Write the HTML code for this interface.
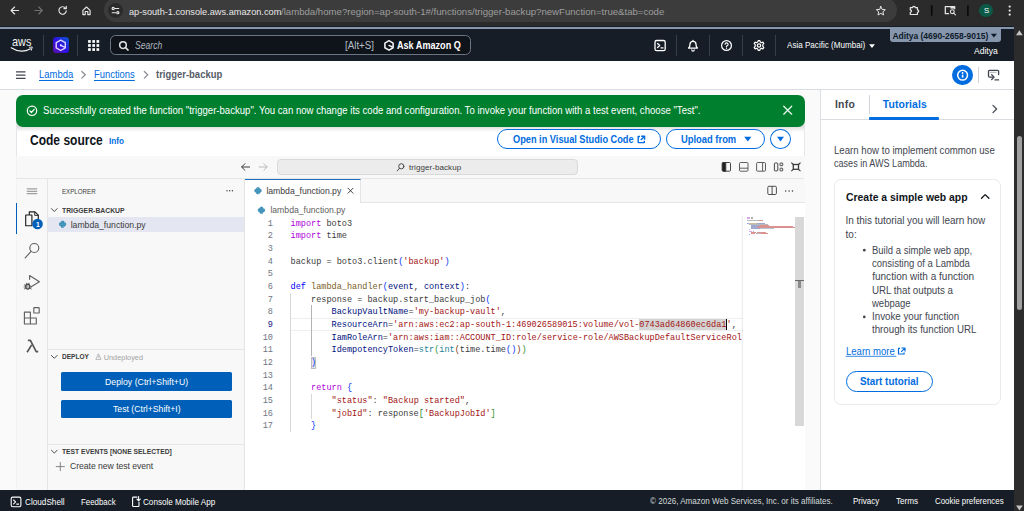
<!DOCTYPE html>
<html lang="en"><head><meta charset="utf-8"><title>trigger-backup - Lambda</title>
<style>

html,body{margin:0;padding:0;overflow:hidden}
body{width:1024px;height:511px;overflow:hidden;background:#fff;position:relative;font-family:"Liberation Sans",sans-serif;}
.t{position:absolute;white-space:pre;}
.a{position:absolute;box-sizing:border-box;}
svg.ov{position:absolute;left:0;top:0;width:1024px;height:511px;overflow:visible;pointer-events:none}
.code{position:absolute;left:290.5px;white-space:pre;font-family:"Liberation Mono",monospace;font-size:8.552px;line-height:12.667px;height:12.667px;color:#3b3b3b;overflow:hidden;width:451.5px}
.num{position:absolute;left:245px;width:27.9px;text-align:right;font-family:"Liberation Mono",monospace;font-size:8.552px;line-height:12.667px;color:#6e7681}
.k{color:#af00db}.d{color:#0000ff}.f{color:#795e26}.p{color:#001080}.s{color:#a31515}.c{color:#267f99}
.b1{color:#0431fa}.b2{color:#319331}.b3{color:#7b3814}
.btn{position:absolute;box-sizing:border-box;border:1.33px solid #006ce0;border-radius:11px;background:#fff}

</style></head>
<body>
<div class="a" style="left:0px;top:0px;width:1024px;height:26.4px;background:#2b2b2b;"></div>
<div class="a" style="left:104.4px;top:-2px;width:792.2px;height:23.8px;background:#3c3c3c;border-radius:12px"></div>
<div class="a" style="left:108.1px;top:3.2px;width:14.8px;height:14.8px;background:#2b2b2b;border-radius:50%"></div>
<div class="a" style="left:979.2px;top:3.8px;width:13.6px;height:13.6px;background:#0b5a47;border-radius:50%"></div>
<div class="a" style="left:0px;top:26.2px;width:1014.3px;height:34.8px;background:#161d26;"></div>
<div class="a" style="left:0px;top:26.7px;width:1014.3px;height:2.8px;background:#8696ad;"></div>
<div class="a" style="left:889.8px;top:26.5px;width:111.3px;height:15.3px;background:#8696ad;border-radius:0 0 3px 3px"></div>
<div class="a" style="left:110.2px;top:34.9px;width:360.4px;height:20.6px;background:#0f141a;border:1.3px solid #6b7583;border-radius:5.5px"></div>
<div class="a" style="left:43.2px;top:35px;width:0.9px;height:20.5px;background:#353e4a;"></div>
<div class="a" style="left:77.2px;top:35px;width:0.9px;height:20.5px;background:#353e4a;"></div>
<div class="a" style="left:676.2px;top:35px;width:0.9px;height:20.5px;background:#353e4a;"></div>
<div class="a" style="left:709.2px;top:35px;width:0.9px;height:20.5px;background:#353e4a;"></div>
<div class="a" style="left:742.2px;top:35px;width:0.9px;height:20.5px;background:#353e4a;"></div>
<div class="a" style="left:775.4px;top:35px;width:0.9px;height:20.5px;background:#353e4a;"></div>
<div class="a" style="left:52.75px;top:37px;width:16.2px;height:16.1px;background:linear-gradient(45deg,#5a0fb2 5%,#2c12e4 50%,#0a5ad0 100%);border-radius:3.6px"></div>
<div class="a" style="left:0px;top:61px;width:1014.3px;height:28.5px;background:#fff;border-bottom:1px solid #d9dde2"></div>
<div class="a" style="left:977.9px;top:66.8px;width:0.9px;height:16px;background:#cdd0d6;"></div>
<div class="a" style="left:952.4px;top:64.9px;width:20.5px;height:20.5px;background:#006ce0;border-radius:50%"></div>
<div class="a" style="left:820.1px;top:89.5px;width:194.2px;height:400.5px;background:#fff;border-left:1.3px solid #dde0e5"></div>
<div class="a" style="left:821px;top:119px;width:193.3px;height:1px;background:#d9dde2;"></div>
<div class="a" style="left:868.6px;top:95px;width:0.9px;height:18.6px;background:#d0d4da;"></div>
<div class="a" style="left:869px;top:117px;width:70px;height:2.6px;background:#006ce0;border-radius:1px"></div>
<div class="a" style="left:834.4px;top:178.8px;width:166.4px;height:226.4px;background:#fff;border:1px solid #e8eaed;border-radius:7px"></div>
<div class="a" style="left:0px;top:90px;width:820.3px;height:400px;background:#fafafb;"></div>
<div class="a" style="left:16.2px;top:110px;width:788.6px;height:46px;background:#fff;border-left:1px solid #e2e5e9;border-right:1px solid #e6e8ec"></div>
<div class="a" style="left:245px;top:178.8px;width:559.5px;height:311.2px;background:#fff;"></div>
<div class="a" style="left:17.2px;top:124px;width:787.2px;height:7.5px;background:linear-gradient(rgba(0,0,0,.13) 30%,rgba(0,0,0,0));"></div>
<div class="a" style="left:16px;top:95px;width:789px;height:31.6px;background:#00802f;border-radius:7px"></div>
<div class="btn" style="left:497px;top:129px;width:163.5px;height:20.3px"></div>
<div class="btn" style="left:666px;top:129px;width:99px;height:20.3px"></div>
<div class="btn" style="left:770.2px;top:129px;width:20.6px;height:20.3px;border-radius:50%"></div>
<div class="a" style="left:16.2px;top:155.5px;width:788.3px;height:23.3px;background:#f8f8f8;border-bottom:1px solid #e5e5e5;border-left:1px solid #f3f3f4"></div>
<div class="a" style="left:277.25px;top:159.25px;width:300.75px;height:15.3px;background:#ececec;border:1px solid #d9d9d9;border-radius:4px"></div>
<div class="a" style="left:16.2px;top:178.8px;width:31.8px;height:311.2px;background:#f8f8f8;border-right:1px solid #e5e5e5;border-left:1px solid #f3f3f4"></div>
<div class="a" style="left:48px;top:178.8px;width:197px;height:311.2px;background:#f8f8f8;border-right:1px solid #e5e5e5"></div>
<div class="a" style="left:245px;top:178.8px;width:559.5px;height:24px;background:#f8f8f8;border-bottom:1px solid #e5e5e5"></div>
<div class="a" style="left:245px;top:178.8px;width:115.5px;height:24px;background:#fff;border-top:.8px solid #1a6fc0;border-right:1px solid #e5e5e5"></div>
<div class="a" style="left:16px;top:202.6px;width:1.4px;height:31.8px;background:#005fb8;"></div>
<div class="a" style="left:48px;top:217px;width:196.3px;height:14.8px;background:#e4e6f1;"></div>
<div class="a" style="left:48px;top:349.3px;width:196.3px;height:1px;background:#e5e5e5;"></div>
<div class="a" style="left:48px;top:444.3px;width:196.3px;height:1px;background:#e5e5e5;"></div>
<div class="a" style="left:61.25px;top:372px;width:170.25px;height:18.75px;background:#005fb8;border-radius:1.5px"></div>
<div class="a" style="left:61.25px;top:399.5px;width:170.25px;height:18.6px;background:#005fb8;border-radius:1.5px"></div>
<div class="a" style="left:290.5px;top:318.0px;width:452px;height:1.2px;background:#eeeeee;"></div>
<div class="a" style="left:290.5px;top:329.5px;width:452px;height:1.2px;background:#eeeeee;"></div>
<div class="a" style="left:639.4px;top:318.9px;width:86.9px;height:11.2px;background:#d4d4d4;"></div>
<div class="a" style="left:726.2px;top:318.6px;width:1px;height:11.8px;background:#000;"></div>
<div class="a" style="left:290.3px;top:292.7px;width:0.8px;height:139.6px;background:#d8d8d8;"></div>
<div class="a" style="left:310.6px;top:305.4px;width:0.9px;height:50.6px;background:#b4b4b4;"></div>
<div class="a" style="left:310.6px;top:394px;width:0.9px;height:25.4px;background:#d8d8d8;"></div>
<div class="a" style="left:311px;top:356.8px;width:5.4px;height:11.8px;background:#e6e6e6;border:0.7px solid #bdbdbd"></div>
<div class="a" style="left:741.4px;top:216.2px;width:1.4px;height:273.8px;background:linear-gradient(90deg,rgba(0,0,0,0),rgba(0,0,0,.09));"></div>
<div class="a" style="left:795px;top:216.9px;width:9.3px;height:209.6px;background:#d8d8d8;"></div>
<div class="a" style="left:795.2px;top:279.6px;width:9px;height:1.6px;background:#6a6a6a;"></div>
<div class="a" style="left:798.4px;top:281px;width:2.6px;height:6.6px;background:#8a8a8a;"></div>
<div class="a" style="left:0px;top:489.8px;width:1014.3px;height:21.2px;background:#161d26;"></div>
<div class="a" style="left:1014.3px;top:26.4px;width:9.7px;height:484.6px;background:#2c2c2c;"></div>
<div class="a" style="left:1016.7px;top:136px;width:5.6px;height:173.5px;background:#a0a0a0;border-radius:2.8px"></div>
<div class="a" style="left:747.0px;top:217.1px;width:3.18px;height:1.1px;background:#c56ae0;opacity:.6"></div>
<div class="a" style="left:750.71px;top:217.1px;width:2.65px;height:1.1px;background:#777;opacity:.6"></div>
<div class="a" style="left:747.0px;top:218.18px;width:3.18px;height:1.1px;background:#c56ae0;opacity:.6"></div>
<div class="a" style="left:750.71px;top:218.18px;width:2.12px;height:1.1px;background:#777;opacity:.6"></div>
<div class="a" style="left:747.0px;top:220.34px;width:12.19px;height:1.1px;background:#8a8a8a;opacity:.6"></div>
<div class="a" style="left:759.19px;top:220.34px;width:4.24px;height:1.1px;background:#c44848;opacity:.6"></div>
<div class="a" style="left:747.0px;top:222.5px;width:1.59px;height:1.1px;background:#6a6af0;opacity:.6"></div>
<div class="a" style="left:749.12px;top:222.5px;width:7.42px;height:1.1px;background:#a8935f;opacity:.6"></div>
<div class="a" style="left:757.07px;top:222.5px;width:7.95px;height:1.1px;background:#5f6fb0;opacity:.6"></div>
<div class="a" style="left:749.12px;top:223.58px;width:18.55px;height:1.1px;background:#8a8a8a;opacity:.6"></div>
<div class="a" style="left:751.24px;top:224.66px;width:8.48px;height:1.1px;background:#5f6fb0;opacity:.6"></div>
<div class="a" style="left:759.72px;top:224.66px;width:9.54px;height:1.1px;background:#c44848;opacity:.6"></div>
<div class="a" style="left:751.24px;top:225.74px;width:6.36px;height:1.1px;background:#5f6fb0;opacity:.6"></div>
<div class="a" style="left:757.6px;top:225.74px;width:34.98px;height:1.1px;background:#c44848;opacity:.6"></div>
<div class="a" style="left:751.24px;top:226.82px;width:5.83px;height:1.1px;background:#5f6fb0;opacity:.6"></div>
<div class="a" style="left:757.07px;top:226.82px;width:37.53px;height:1.1px;background:#c44848;opacity:.6"></div>
<div class="a" style="left:751.24px;top:227.9px;width:9.01px;height:1.1px;background:#5f6fb0;opacity:.6"></div>
<div class="a" style="left:760.25px;top:227.9px;width:13.25px;height:1.1px;background:#7aa7b5;opacity:.6"></div>
<div class="a" style="left:749.12px;top:228.98px;width:0.53px;height:1.1px;background:#6a6af0;opacity:.6"></div>
<div class="a" style="left:749.12px;top:231.14px;width:3.18px;height:1.1px;background:#c56ae0;opacity:.6"></div>
<div class="a" style="left:752.83px;top:231.14px;width:0.53px;height:1.1px;background:#6a6af0;opacity:.6"></div>
<div class="a" style="left:751.24px;top:232.22px;width:4.77px;height:1.1px;background:#c44848;opacity:.6"></div>
<div class="a" style="left:757.07px;top:232.22px;width:9.01px;height:1.1px;background:#c44848;opacity:.6"></div>
<div class="a" style="left:751.24px;top:233.3px;width:3.71px;height:1.1px;background:#c44848;opacity:.6"></div>
<div class="a" style="left:756.01px;top:233.3px;width:4.77px;height:1.1px;background:#8a8a8a;opacity:.6"></div>
<div class="a" style="left:760.78px;top:233.3px;width:7.42px;height:1.1px;background:#c44848;opacity:.6"></div>
<div class="a" style="left:749.12px;top:234.38px;width:0.53px;height:1.1px;background:#6a6af0;opacity:.6"></div>
<div class="num" style="top:217.8px">1</div><div class="code" style="top:217.8px"><span class="k">import</span> boto3</div>
<div class="num" style="top:230.47px">2</div><div class="code" style="top:230.47px"><span class="k">import</span> time</div>
<div class="num" style="top:243.13px">3</div><div class="code" style="top:243.13px"></div>
<div class="num" style="top:255.8px">4</div><div class="code" style="top:255.8px">backup = boto3.client<span class="b1">(</span><span class="s">'backup'</span><span class="b1">)</span></div>
<div class="num" style="top:268.47px">5</div><div class="code" style="top:268.47px"></div>
<div class="num" style="top:281.13px">6</div><div class="code" style="top:281.13px"><span class="d">def</span> <span class="f">lambda_handler</span><span class="b1">(</span><span class="p">event</span>, <span class="p">context</span><span class="b1">)</span>:</div>
<div class="num" style="top:293.8px">7</div><div class="code" style="top:293.8px">    response = backup.start_backup_job<span class="b1">(</span></div>
<div class="num" style="top:306.47px">8</div><div class="code" style="top:306.47px">        <span class="p">BackupVaultName</span>=<span class="s">'my-backup-vault'</span>,</div>
<div class="num" style="top:319.14px;color:#171184">9</div><div class="code" style="top:319.14px">        <span class="p">ResourceArn</span>=<span class="s">'arn:aws:ec2:ap-south-1:469026589015:volume/vol-0743ad64860ec6da1'</span>,</div>
<div class="num" style="top:331.8px">10</div><div class="code" style="top:331.8px">        <span class="p">IamRoleArn</span>=<span class="s">'arn:aws:iam::ACCOUNT_ID:role/service-role/AWSBackupDefaultServiceRole'</span>,</div>
<div class="num" style="top:344.47px">11</div><div class="code" style="top:344.47px">        <span class="p">IdempotencyToken</span>=<span class="c">str</span><span class="b2">(</span><span class="c">int</span><span class="b3">(</span>time.time<span class="b1">()</span><span class="b3">)</span><span class="b2">)</span></div>
<div class="num" style="top:357.14px">12</div><div class="code" style="top:357.14px">    <span class="b1">)</span></div>
<div class="num" style="top:369.8px">13</div><div class="code" style="top:369.8px"></div>
<div class="num" style="top:382.47px">14</div><div class="code" style="top:382.47px">    <span class="k">return</span> <span class="b1">{</span></div>
<div class="num" style="top:395.14px">15</div><div class="code" style="top:395.14px">        <span class="s">"status"</span>: <span class="s">"Backup started"</span>,</div>
<div class="num" style="top:407.81px">16</div><div class="code" style="top:407.81px">        <span class="s">"jobId"</span>: response<span class="b2">[</span><span class="s">'BackupJobId'</span><span class="b2">]</span></div>
<div class="num" style="top:420.47px">17</div><div class="code" style="top:420.47px">    <span class="b1">}</span></div>
<svg class="ov" viewBox="0 0 1024 511"><g fill="none" stroke="#e6e6e6" stroke-width="1.15" stroke-linecap="round" stroke-linejoin="round"><path d="M18.6 10.5H11.2M14.6 7L11.1 10.5L14.6 14"/><path d="M34.8 10.5H42.2M38.8 7L42.3 10.5L38.8 14" stroke="#707070"/><path d="M65.6 8.3A3.7 3.7 0 1 0 66.3 10.9"/><path d="M66.3 6.2V8.6H63.9"/><path d="M82.9 10.3L86.5 7L90.1 10.3V14.6H87.8V11.5H85.2V14.6H82.9Z"/><path d="M115.2 8.5H118.7M112.2 12.7H115.6"/><circle cx="113.2" cy="8.5" r="1.1"/><circle cx="117.8" cy="12.7" r="1.1"/><path d="M880.8 6.4L882.1 9.4L885.3 9.7L882.9 11.8L883.6 15L880.8 13.3L878 15L878.7 11.8L876.3 9.7L879.5 9.400Z" stroke-width="1"/><path d="M910.3 7.6H912.6A1.3 1.3 0 0 1 915.2 7.600H917.4V9.800A1.3 1.3 0 0 1 917.4 12.4V14.500H910.3V12.3A1.2 1.2 0 0 0 910.3 9.900Z" stroke-width="1.2"/><path d="M948.600 13.700H945.300V6.600H954.700V8.800" stroke-width="1.250"/><rect x="950.400" y="6.600" width="4.300" height="2" fill="#e6e6e6" stroke="none"/><circle cx="952.3" cy="11.7" r="1.9" stroke-width="1.1"/><path d="M953.8 13.2L955.4 14.8" stroke-width="1.1"/></g>
<rect x="930.900" y="5.300" width="1.600" height="10.500" rx=".5" fill="#080808"/><rect x="967.100" y="5.300" width="1.600" height="10.500" rx=".5" fill="#080808"/>
<circle cx="1009.7" cy="6.6" r="1.150" fill="#e6e6e6"/><circle cx="1009.7" cy="10.6" r="1.150" fill="#e6e6e6"/><circle cx="1009.7" cy="14.6" r="1.150" fill="#e6e6e6"/>
<path d="M1016 35.200L1019.400 30.200L1022.800 35.200Z" fill="#c4c4c4"/><path d="M1016 505.400L1019.400 510.400L1022.800 505.400Z" fill="#c4c4c4"/>
<path d="M11.200 47.800Q20.800 54.100 30.600 48.800" stroke="#f4f4f4" stroke-width="1.200" fill="none" stroke-linecap="round"/><path d="M29.300 47.300L32.300 47L31.300 50.300" fill="none" stroke="#f4f4f4" stroke-width=".9" stroke-linejoin="round" stroke-linecap="round"/>
<g fill="none" stroke="#ddd3ff" stroke-width="1.400" stroke-linejoin="round"><path d="M60.750 40.100L65.300 42.700V47.900L60.750 50.500L56.200 47.900V42.700Z"/><path d="M60.750 45.300L64.600 47.100" stroke-linecap="round"/></g><circle cx="60.750" cy="45.300" r="1" fill="#efeaff"/>
<g fill="#fff"><rect x="88.10" y="40.10" width="2.700" height="2.700"/><rect x="92.30" y="40.10" width="2.700" height="2.700"/><rect x="96.50" y="40.10" width="2.700" height="2.700"/><rect x="88.10" y="44.15" width="2.700" height="2.700"/><rect x="92.30" y="44.15" width="2.700" height="2.700"/><rect x="96.50" y="44.15" width="2.700" height="2.700"/><rect x="88.10" y="48.20" width="2.700" height="2.700"/><rect x="92.30" y="48.20" width="2.700" height="2.700"/><rect x="96.50" y="48.20" width="2.700" height="2.700"/></g>
<g fill="none" stroke="#e2e3e8" stroke-width="1.500" stroke-linecap="round"><circle cx="123" cy="45.100" r="3.300"/><path d="M125.500 47.600L128.100 50.100"/></g>
<g fill="none" stroke="#f2f3f5" stroke-width="1.550" stroke-linejoin="round"><path d="M389 40.700L393.100 43.050V47.750L389 50.100L384.900 47.750V43.050Z"/><path d="M389 45.400L392.300 47" stroke-linecap="round" stroke-width="1.400"/></g>
<g fill="none" stroke="#fff" stroke-width="1.300" stroke-linecap="round" stroke-linejoin="round"><rect x="655" y="40.500" width="10.200" height="10.200" rx="1.700"/><path d="M657.500 43.600L659.700 45.600L657.500 47.600M661 47.900H663"/><path d="M688.600 48.100H697.400C696.300 47.100 696 46.200 696 44.300A3 3 0 0 0 690 44.300C690 46.200 689.700 47.100 688.600 48.100Z" stroke-width="1.300"/><path d="M691.800 49.900A1.200 1.200 0 0 0 694.200 49.900" stroke-width="1.200"/><path d="M693 40.400V41.200"/><circle cx="726.500" cy="45.500" r="4.900" stroke-width="1.250"/><path d="M725 44.300A1.550 1.550 0 1 1 726.500 46V46.900" stroke-width="1.150"/><circle cx="726.500" cy="48.500" r=".6" fill="#fff" stroke="none"/><circle cx="759" cy="45.500" r="1.700" stroke-width="1.200"/><path d="M758.200 40.600H759.800L760.300 42L761.500 42.700L762.900 42.100L763.800 43.600L762.800 44.700V46.300L763.800 47.400L762.900 48.900L761.500 48.300L760.300 49L759.800 50.400H758.200L757.700 49L756.500 48.300L755.100 48.900L754.200 47.400L755.200 46.300V44.700L754.200 43.600L755.100 42.100L756.500 42.700L757.700 42Z" stroke-width="1.200"/></g>
<path d="M869.100 44.200H874.900L872 48Z" fill="#fff"/><path d="M990.800 33.700H997L993.900 37.600Z" fill="#0f1b2a"/>
<path d="M16 71.750H25.500M16 75H25.500M16 78.250H25.500" stroke="#424650" stroke-width="1.25"/>
<g fill="none" stroke="#8c8c94" stroke-width="1.2" stroke-linecap="round" stroke-linejoin="round"><path d="M81.800 71.500L85.300 74.800L81.800 78.100"/><path d="M144.300 71.500L147.800 74.800L144.300 78.100"/></g>
<circle cx="962.6" cy="75.2" r="4.900" fill="none" stroke="#fff" stroke-width="1.500"/><path d="M962.600 74.700V77.600" stroke="#fff" stroke-width="1.600"/><circle cx="962.600" cy="73" r=".9" fill="#fff"/>
<g fill="none" stroke="#424650" stroke-width="1.3" stroke-linejoin="round" stroke-linecap="round"><path d="M998.600 74.600V71.300Q998.600 70.400 997.700 70.400H989.400Q988.500 70.400 988.500 71.300V76.100Q988.500 77.100 989.500 77.100H993.400"/><path d="M990.200 72.300H996" stroke-width=".8" opacity=".55"/><path d="M991.700 74.700L994.100 77.100L991.700 79.500"/><path d="M995 79.900H998.600"/></g>
<g fill="none" stroke="#fff" stroke-width="1.2" stroke-linecap="round" stroke-linejoin="round"><circle cx="32" cy="110.800" r="4.700"/><path d="M29.900 110.900L31.400 112.500L34.200 109.300"/><path d="M783.700 106.200L791.700 114.200M791.700 106.200L783.700 114.200" stroke-width="1.250" stroke="#eef6f0"/></g>
<g fill="none" stroke="#006ce0" stroke-width="1.400" stroke-linejoin="round"><path d="M640 136.500H638.200V142.600H644.300V140.800"/><path d="M641.100 136.200H644.600V139.700M644.400 136.400L640.800 140"/></g>
<path d="M744.200 136.700H751.400L747.800 141.500Z" fill="#006ce0"/><path d="M777 136.800H784L780.500 141.500Z" fill="#006ce0"/>
<g fill="none" stroke-width="1" stroke-linecap="round" stroke-linejoin="round"><path d="M249.600 167H241.800M244.900 163.700L241.600 167L244.900 170.300" stroke="#3b3b3b"/><path d="M259.200 167H267M263.900 163.700L267.200 167L263.900 170.300" stroke="#b9b9b9"/><circle cx="401.300" cy="166.300" r="2.600" stroke="#3b3b3b" stroke-width=".9"/><path d="M399.500 168.300L397.200 170.900" stroke="#3b3b3b" stroke-width=".9"/></g>
<g fill="none" stroke="#3b3b3b" stroke-width=".95"><rect x="722.300" y="162.500" width="8.200" height="8.700" rx="1.100"/><path d="M722.300 163.400Q722.300 162.500 723.300 162.500H725.800V171.200H723.300Q722.300 171.200 722.300 170.200Z" fill="#1f1f1f"/><rect x="739.500" y="162.500" width="8.500" height="8.700" rx="1.100" stroke="#555"/><path d="M739.500 168.200H748" stroke="#555"/><rect x="756.600" y="162.500" width="8.900" height="8.700" rx="1.100" stroke="#555"/><path d="M762.600 162.500V171.200" stroke="#555"/><rect x="774.400" y="163" width="3.400" height="7.900" rx=".8"/><rect x="780" y="163" width="2.700" height="2.700" rx=".6"/><rect x="780" y="168.200" width="2.700" height="2.700" rx=".6"/><rect x="793.300" y="164.500" width="5.200" height="4.800" stroke-width="1.300"/><path d="M791.300 162.600L793.300 164.500M800.500 162.600L798.500 164.500M791.300 171.200L793.300 169.300M800.500 171.200L798.500 169.300" stroke-width="1.100"/></g>
<path d="M26.800 188.900H37.200M26.800 191.300H37.200M26.800 193.700H37.200" stroke="#6e6e6e" stroke-width=".8"/>
<g fill="none" stroke="#1f1f1f" stroke-width="1.15" stroke-linejoin="round"><path d="M29.300 214.900V211.800H34.900L38.300 215.200V223.600H36"/><path d="M34.700 211.900V215.400H38.200" stroke-width=".9"/><path d="M25.700 215H31.900V225.700H25.700Z"/></g>
<circle cx="37.500" cy="224" r="5.300" fill="#005fb8"/>
<g fill="none" stroke="#616161" stroke-width="1.15" stroke-linecap="round" stroke-linejoin="round"><circle cx="34.300" cy="248" r="4.500"/><path d="M31.100 251.300L25.200 257.900"/><path d="M29.600 279.300V275.600L39.400 281.800L31.600 286.600"/><ellipse cx="27.800" cy="286.500" rx="2.100" ry="2.500" stroke="#4a4a4a" stroke-width="1.250" fill="#b9b9b9"/><path d="M24.300 284.800L25.800 285.600M24 286.900H25.600M24.300 289L25.800 288.100M31.300 289L29.800 288.100M31.600 286.900H30M26.500 283.100L27 284M29.100 283.100L28.600 284" stroke-width=".8" stroke="#4a4a4a"/><path d="M24.400 312.100H30.400V324H24.400ZM24.400 318H36.300V324H30.400V312.100" /><rect x="33.800" y="307.600" width="5.400" height="5.400" rx=".6"/></g>
<g fill="none" stroke="#565656" stroke-width="1.700" stroke-linejoin="round"><path d="M27.900 340.400H30.400L36.200 351.700H38.200"/><path d="M31.700 344.900L27.100 352.200"/></g>
<g fill="none" stroke="#3b3b3b" stroke-width=".9" stroke-linecap="round" stroke-linejoin="round"><path d="M51.400 208.600L54.300 211.500L57.200 208.600"/><path d="M51.400 355.400L54.300 358.300L57.200 355.400"/><path d="M51.400 450.200L54.300 453.100L57.200 450.200"/><path d="M56.200 466.600H64.400M60.300 462.500V470.700" stroke="#6a6a6a" stroke-width=".8"/></g>
<g fill="#3b3b3b"><circle cx="227" cy="190.800" r=".7"/><circle cx="229.700" cy="190.800" r=".7"/><circle cx="232.400" cy="190.800" r=".7"/><circle cx="785.700" cy="190.900" r=".75"/><circle cx="789.100" cy="190.900" r=".75"/><circle cx="792.500" cy="190.900" r=".75"/></g>
<path d="M98.400 353.800L101 359.400H95.800Z" fill="none" stroke="#a0a0a0" stroke-width=".7" stroke-linejoin="round"/><path d="M98.400 355.700V357.600" stroke="#a0a0a0" stroke-width=".7"/>
<g transform="translate(62.6 224.2) scale(1)" fill="#3b8fb8"><rect x="-3.600" y="-1.700" width="7.200" height="3.400" rx="1.300"/><rect x="-1.800" y="-3.500" width="3.600" height="7" rx="1.300"/><rect x="-2.300" y="-2.300" width="2" height="2" rx=".6" opacity=".55"/><rect x="0.300" y="0.300" width="2" height="2" rx=".6" opacity=".55"/><circle cx="-0.700" cy="-2.400" r=".4" fill="#eaf3f8"/><circle cx="0.700" cy="2.400" r=".4" fill="#eaf3f8"/><path d="M-3.300 0.100H0.200M-0.200 -0.100H3.300" stroke="#d5e8f2" stroke-width=".3" opacity=".6"/></g>
<g transform="translate(258 190.7) scale(1)" fill="#3b8fb8"><rect x="-3.600" y="-1.700" width="7.200" height="3.400" rx="1.300"/><rect x="-1.800" y="-3.500" width="3.600" height="7" rx="1.300"/><rect x="-2.300" y="-2.300" width="2" height="2" rx=".6" opacity=".55"/><rect x="0.300" y="0.300" width="2" height="2" rx=".6" opacity=".55"/><circle cx="-0.700" cy="-2.400" r=".4" fill="#eaf3f8"/><circle cx="0.700" cy="2.400" r=".4" fill="#eaf3f8"/><path d="M-3.300 0.100H0.200M-0.200 -0.100H3.300" stroke="#d5e8f2" stroke-width=".3" opacity=".6"/></g>
<g transform="translate(261.4 210.2) scale(1)" fill="#3b8fb8"><rect x="-3.600" y="-1.700" width="7.200" height="3.400" rx="1.300"/><rect x="-1.800" y="-3.500" width="3.600" height="7" rx="1.300"/><rect x="-2.300" y="-2.300" width="2" height="2" rx=".6" opacity=".55"/><rect x="0.300" y="0.300" width="2" height="2" rx=".6" opacity=".55"/><circle cx="-0.700" cy="-2.400" r=".4" fill="#eaf3f8"/><circle cx="0.700" cy="2.400" r=".4" fill="#eaf3f8"/><path d="M-3.300 0.100H0.200M-0.200 -0.100H3.300" stroke="#d5e8f2" stroke-width=".3" opacity=".6"/></g>
<path d="M348 188.200L353 193.200M353 188.200L348 193.200" stroke="#3b3b3b" stroke-width=".95" stroke-linecap="round"/>
<g fill="none" stroke="#3b3b3b" stroke-width=".9"><rect x="767.800" y="186.300" width="8.600" height="8.200" rx="1.100"/><path d="M772.100 186.300V194.500"/></g>
<g fill="none" stroke-linecap="round" stroke-linejoin="round"><path d="M993 105.300L996.600 109L993 112.700" stroke="#424650" stroke-width="1.200"/><path d="M981.500 198.300L985.200 194.600L988.900 198.300" stroke="#0f141a" stroke-width="1.300"/></g>
<g fill="none" stroke="#006ce0" stroke-width="1.2" stroke-linejoin="round"><path d="M900 348.400H898.500V354H904.100V352.500"/><path d="M901.400 348H905V351.600M904.800 348.200L901.200 351.800"/></g>
<circle cx="864.300" cy="250.200" r="1.350" fill="#424650"/><circle cx="864.300" cy="316.900" r="1.350" fill="#424650"/>
<path d="M845.600 356.300H896.300" stroke="#006ce0" stroke-width=".8"/>
<g fill="none" stroke="#fff" stroke-width="1.1" stroke-linecap="round" stroke-linejoin="round"><rect x="11.200" y="497.100" width="9.700" height="9.700" rx="1.600"/><path d="M13.600 500L15.600 501.900L13.600 503.800M16.700 504.100H18.600"/><path d="M137 497.100H133.400Q132.600 497.100 132.600 497.900V505.700Q132.600 506.500 133.400 506.500H138.200Q139 506.500 139 505.700V502.400"/><path d="M138.600 496.500V500.600M136.900 499.100L138.600 500.800L140.300 499.100"/></g></svg>
<span class="t" style="left:128.6px;top:5.73px;font-size:9.8px;line-height:12.74px;color:#e8e8e8;transform:scaleX(0.9385);transform-origin:0 50%;">ap-south-1.console.aws.amazon.com</span>
<span class="t" style="left:281px;top:5.73px;font-size:9.8px;line-height:12.74px;color:#9e9e9e;transform:scaleX(0.9809);transform-origin:0 50%;">/lambda/home?region=ap-south-1#/functions/trigger-backup?newFunction=true&amp;tab=code</span>
<span class="t" style="left:983.5px;top:5.5px;font-size:8px;line-height:10.4px;color:#fff;transform:scaleX(0.9731);transform-origin:0 50%;">S</span>
<span class="t" style="left:11.9px;top:33.84px;font-size:12.4px;line-height:16.12px;color:#f4f4f4;transform:scaleX(0.8799);transform-origin:0 50%;">aws</span>
<span class="t" style="left:135px;top:39.0px;font-size:10.0px;line-height:13.0px;color:#b0b6c0;font-style:italic;transform:scaleX(0.8584);transform-origin:0 50%;">Search</span>
<span class="t" style="left:344.7px;top:38.8px;font-size:10.0px;line-height:13.0px;color:#b6bec9;transform:scaleX(0.9748);transform-origin:0 50%;">[Alt+S]</span>
<span class="t" style="left:397.4px;top:39.0px;font-size:10.0px;line-height:13.0px;color:#fff;font-weight:700;transform:scaleX(0.9088);transform-origin:0 50%;">Ask Amazon Q</span>
<span class="t" style="left:787px;top:40.48px;font-size:8.8px;line-height:11.44px;color:#fff;transform:scaleX(0.9193);transform-origin:0 50%;">Asia Pacific (Mumbai)</span>
<span class="t" style="left:892.4px;top:30.58px;font-size:8.5px;line-height:11.05px;color:#0f1b2a;font-weight:700;letter-spacing:-0.026px;">Aditya (4690-2658-9015)</span>
<span class="t" style="left:974.2px;top:46.18px;font-size:8.8px;line-height:11.44px;color:#fff;transform:scaleX(0.9733);transform-origin:0 50%;">Aditya</span>
<span class="t" style="left:39px;top:68.1px;font-size:10.0px;line-height:13.0px;color:#006ce0;transform:scaleX(0.9463);transform-origin:0 50%;text-decoration:underline;text-underline-offset:1.5px;text-decoration-thickness:.7px;">Lambda</span>
<span class="t" style="left:94.4px;top:68.1px;font-size:10.0px;line-height:13.0px;color:#006ce0;transform:scaleX(0.9410);transform-origin:0 50%;text-decoration:underline;text-underline-offset:1.5px;text-decoration-thickness:.7px;">Functions</span>
<span class="t" style="left:156.4px;top:68.1px;font-size:10.0px;line-height:13.0px;color:#565c66;font-weight:700;transform:scaleX(0.9455);transform-origin:0 50%;">trigger-backup</span>
<span class="t" style="left:43px;top:103.8px;font-size:10.0px;line-height:13.0px;color:#fff;transform:scaleX(0.9583);transform-origin:0 50%;">Successfully created the function "trigger-backup". You can now change its code and configuration. To invoke your function with a test event, choose "Test".</span>
<span class="t" style="left:30.4px;top:130.9px;font-size:14.0px;line-height:18.2px;color:#0f141a;font-weight:700;transform:scaleX(0.8584);transform-origin:0 50%;">Code source</span>
<span class="t" style="left:109.2px;top:136.11px;font-size:8.6px;line-height:11.18px;color:#006ce0;font-weight:700;transform:scaleX(0.9524);transform-origin:0 50%;">Info</span>
<span class="t" style="left:512.6px;top:132.7px;font-size:10.0px;line-height:13.0px;color:#006ce0;font-weight:700;transform:scaleX(0.9211);transform-origin:0 50%;">Open in Visual Studio Code</span>
<span class="t" style="left:681px;top:132.7px;font-size:10.0px;line-height:13.0px;color:#006ce0;font-weight:700;transform:scaleX(0.9373);transform-origin:0 50%;">Upload from</span>
<span class="t" style="left:409px;top:162.7px;font-size:8px;line-height:10.4px;color:#3b3b3b;letter-spacing:0.076px;">trigger-backup</span>
<span class="t" style="left:61.5px;top:186.53px;font-size:7.8px;line-height:10.14px;color:#3b3b3b;transform:scaleX(0.7912);transform-origin:0 50%;">EXPLORER</span>
<span class="t" style="left:61.5px;top:205.97px;font-size:7.9px;line-height:10.27px;color:#3b3b3b;font-weight:700;transform:scaleX(0.8653);transform-origin:0 50%;">TRIGGER-BACKUP</span>
<span class="t" style="left:70.7px;top:219.77px;font-size:8.67px;line-height:11.27px;color:#3b3b3b;letter-spacing:-0.004px;">lambda_function.py</span>
<span class="t" style="left:61.5px;top:352.26px;font-size:7.9px;line-height:10.27px;color:#3b3b3b;font-weight:700;transform:scaleX(0.8320);transform-origin:0 50%;">DEPLOY</span>
<span class="t" style="left:103.7px;top:352.54px;font-size:7.33px;line-height:9.53px;color:#a3a3a3;letter-spacing:0.027px;">Undeployed</span>
<span class="t" style="left:105px;top:376.76px;font-size:8.67px;line-height:11.27px;color:#fff;letter-spacing:0.044px;">Deploy (Ctrl+Shift+U)</span>
<span class="t" style="left:113px;top:404.26px;font-size:8.67px;line-height:11.27px;color:#fff;letter-spacing:0.013px;">Test (Ctrl+Shift+I)</span>
<span class="t" style="left:61.5px;top:447.37px;font-size:7.9px;line-height:10.27px;color:#3b3b3b;font-weight:700;transform:scaleX(0.8547);transform-origin:0 50%;">TEST EVENTS [NONE SELECTED]</span>
<span class="t" style="left:70px;top:461.37px;font-size:8.67px;line-height:11.27px;color:#3b3b3b;letter-spacing:-0.049px;">Create new test event</span>
<span class="t" style="left:35.7px;top:219.55px;font-size:7px;line-height:9.1px;color:#fff;font-weight:700;transform:scaleX(0.9728);transform-origin:0 50%;">1</span>
<span class="t" style="left:266.4px;top:185.67px;font-size:8.67px;line-height:11.27px;color:#3b3b3b;letter-spacing:-0.015px;">lambda_function.py</span>
<span class="t" style="left:270.4px;top:204.56px;font-size:8.67px;line-height:11.27px;color:#616161;letter-spacing:-0.004px;">lambda_function.py</span>
<span class="t" style="left:835px;top:98.24px;font-size:10.4px;line-height:13.52px;color:#424650;font-weight:700;letter-spacing:0.238px;">Info</span>
<span class="t" style="left:882.8px;top:98.24px;font-size:10.4px;line-height:13.52px;color:#006ce0;font-weight:700;letter-spacing:0.099px;">Tutorials</span>
<span class="t" style="left:834.3px;top:144.2px;font-size:10.0px;line-height:13.0px;color:#424650;transform:scaleX(0.9643);transform-origin:0 50%;">Learn how to implement common use</span>
<span class="t" style="left:834.3px;top:157.4px;font-size:10.0px;line-height:13.0px;color:#424650;transform:scaleX(0.9067);transform-origin:0 50%;">cases in AWS Lambda.</span>
<span class="t" style="left:845.5px;top:189.96px;font-size:11.3px;line-height:14.69px;color:#0f141a;font-weight:700;transform:scaleX(0.9222);transform-origin:0 50%;">Create a simple web app</span>
<span class="t" style="left:845.5px;top:214.4px;font-size:10.0px;line-height:13.0px;color:#424650;letter-spacing:-0.040px;">In this tutorial you will learn how</span>
<span class="t" style="left:845.5px;top:227.6px;font-size:10.0px;line-height:13.0px;color:#424650;letter-spacing:0.092px;">to:</span>
<span class="t" style="left:872.2px;top:243.6px;font-size:10.0px;line-height:13.0px;color:#424650;transform:scaleX(0.9486);transform-origin:0 50%;">Build a simple web app,</span>
<span class="t" style="left:872.2px;top:256.9px;font-size:10.0px;line-height:13.0px;color:#424650;transform:scaleX(0.9510);transform-origin:0 50%;">consisting of a Lambda</span>
<span class="t" style="left:872.2px;top:270.2px;font-size:10.0px;line-height:13.0px;color:#424650;letter-spacing:0.011px;">function with a function</span>
<span class="t" style="left:872.2px;top:283.5px;font-size:10.0px;line-height:13.0px;color:#424650;transform:scaleX(0.9757);transform-origin:0 50%;">URL that outputs a</span>
<span class="t" style="left:872.2px;top:296.9px;font-size:10.0px;line-height:13.0px;color:#424650;transform:scaleX(0.9509);transform-origin:0 50%;">webpage</span>
<span class="t" style="left:872.2px;top:310.3px;font-size:10.0px;line-height:13.0px;color:#424650;transform:scaleX(0.9743);transform-origin:0 50%;">Invoke your function</span>
<span class="t" style="left:872.2px;top:323.4px;font-size:10.0px;line-height:13.0px;color:#424650;transform:scaleX(0.9731);transform-origin:0 50%;">through its function URL</span>
<span class="t" style="left:845.5px;top:344.8px;font-size:10.0px;line-height:13.0px;color:#006ce0;transform:scaleX(0.9542);transform-origin:0 50%;">Learn more</span>
<span class="t" style="left:860px;top:375.4px;font-size:10.0px;line-height:13.0px;color:#006ce0;font-weight:700;transform:scaleX(0.9823);transform-origin:0 50%;">Start tutorial</span>
<span class="t" style="left:24.5px;top:496.58px;font-size:8.8px;line-height:11.44px;color:#fff;transform:scaleX(0.9307);transform-origin:0 50%;">CloudShell</span>
<span class="t" style="left:80.5px;top:496.58px;font-size:8.8px;line-height:11.44px;color:#fff;transform:scaleX(0.8954);transform-origin:0 50%;">Feedback</span>
<span class="t" style="left:143.4px;top:496.58px;font-size:8.8px;line-height:11.44px;color:#fff;transform:scaleX(0.9227);transform-origin:0 50%;">Console Mobile App</span>
<span class="t" style="left:650.4px;top:495.88px;font-size:8.8px;line-height:11.44px;color:#d5dbdb;transform:scaleX(0.9172);transform-origin:0 50%;">© 2026, Amazon Web Services, Inc. or its affiliates.</span>
<span class="t" style="left:853.4px;top:496.28px;font-size:8.8px;line-height:11.44px;color:#fff;transform:scaleX(0.9083);transform-origin:0 50%;">Privacy</span>
<span class="t" style="left:896px;top:496.28px;font-size:8.8px;line-height:11.44px;color:#fff;transform:scaleX(0.9268);transform-origin:0 50%;">Terms</span>
<span class="t" style="left:935px;top:496.28px;font-size:8.8px;line-height:11.44px;color:#fff;transform:scaleX(0.8993);transform-origin:0 50%;">Cookie preferences</span>
<div class="btn" style="left:845.6px;top:371.2px;width:87.3px;height:20.5px;background:none"></div>
</body></html>
